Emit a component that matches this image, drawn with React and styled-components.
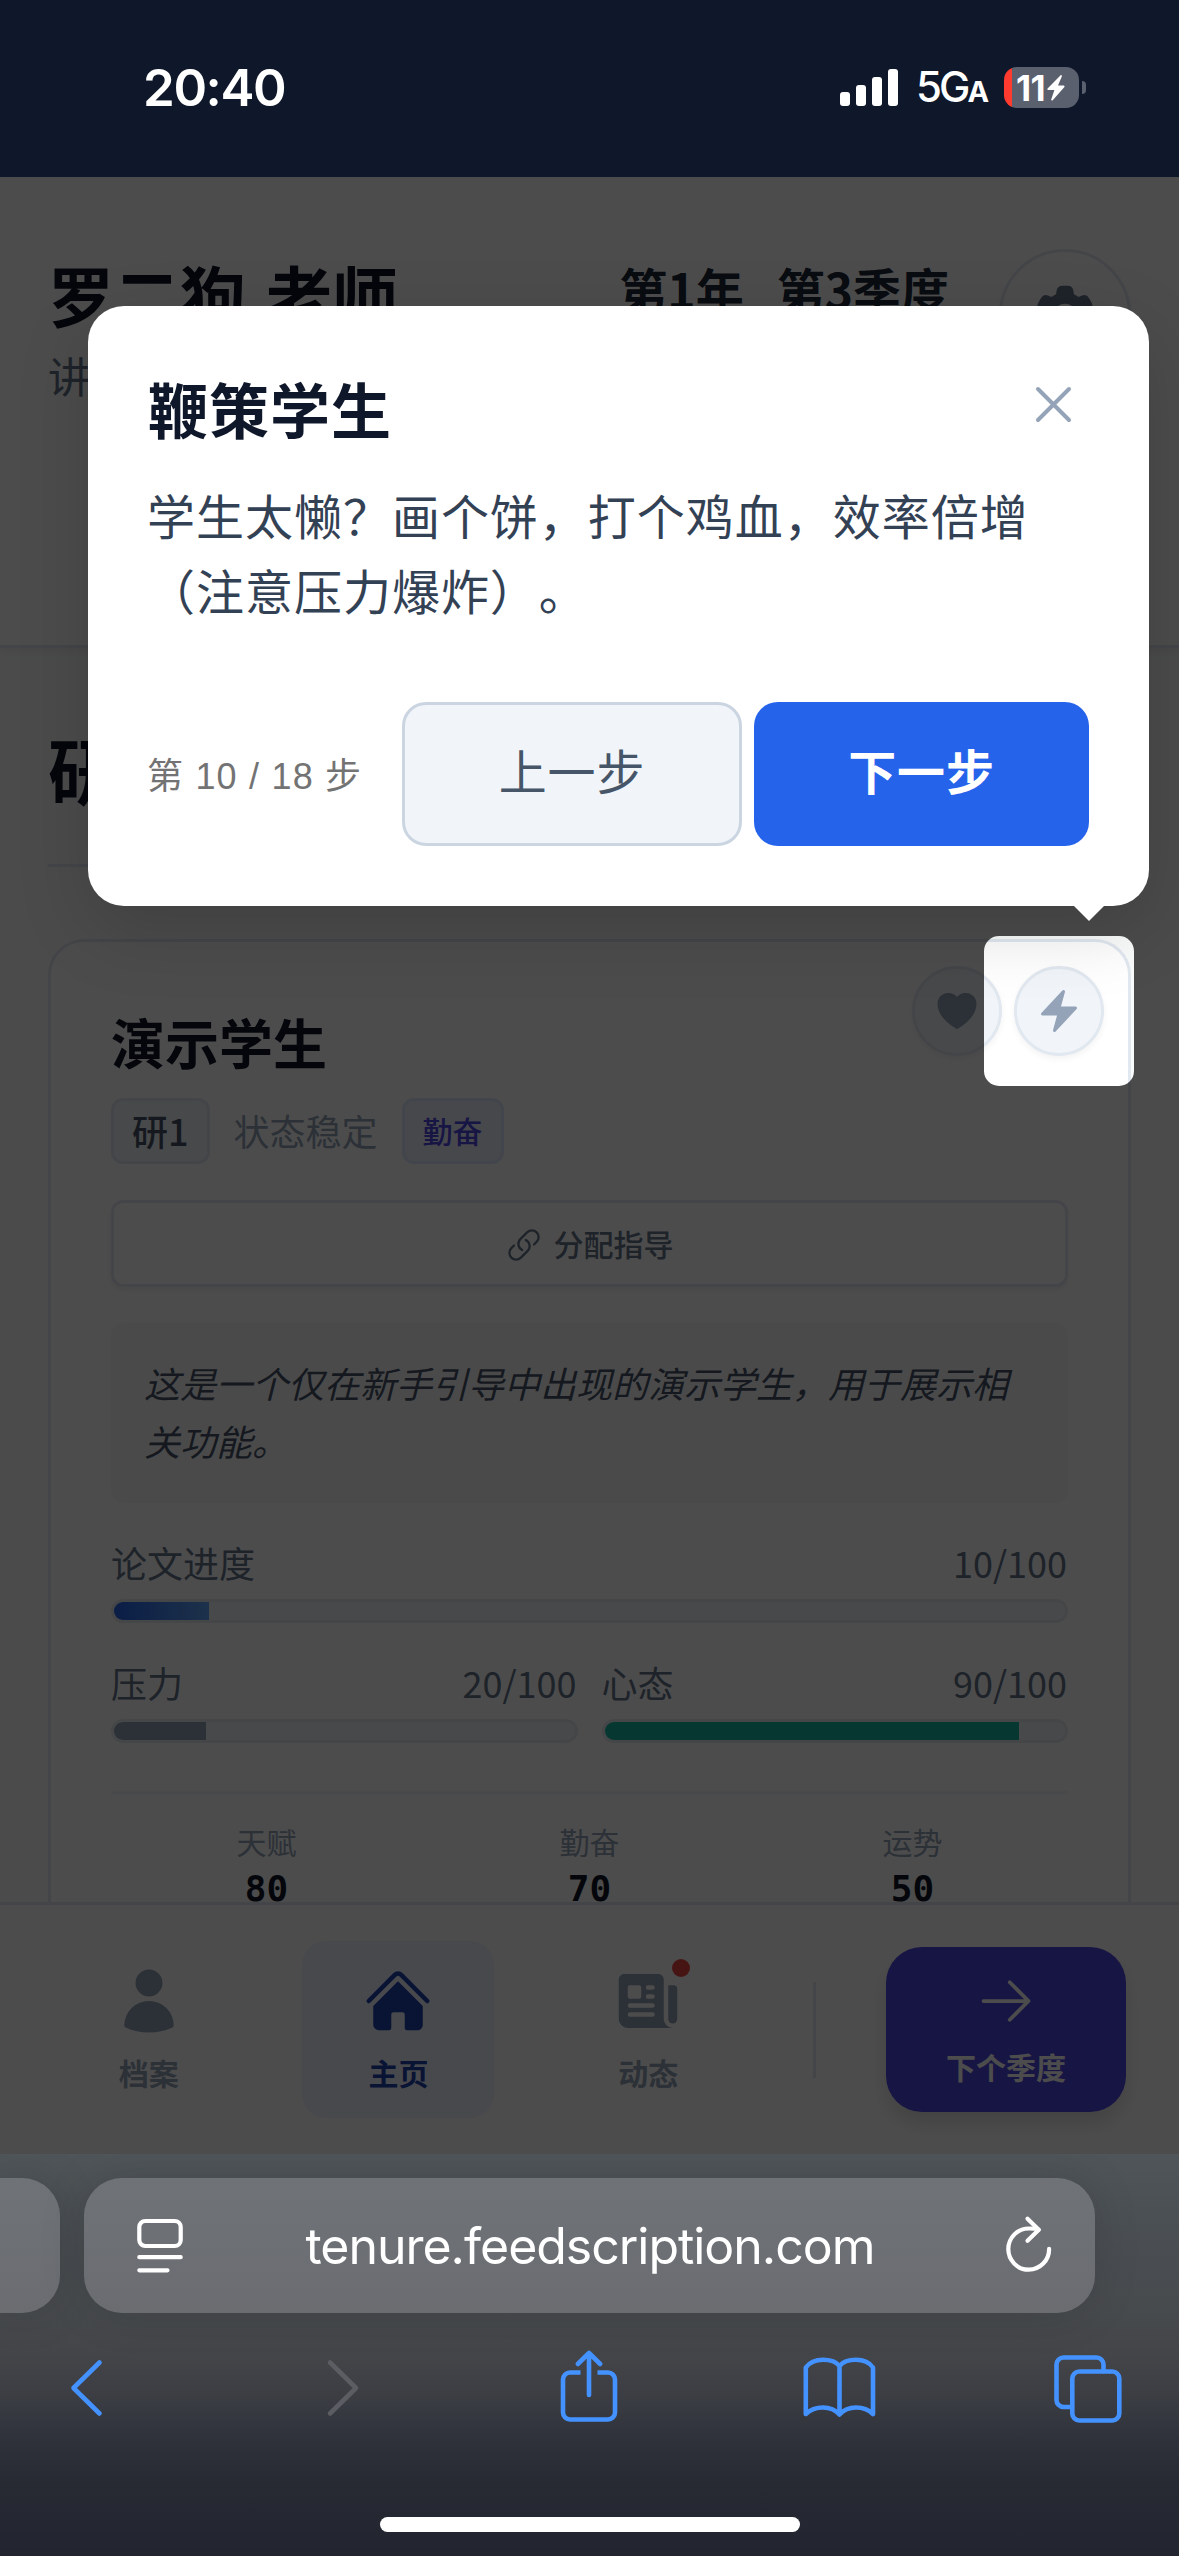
import React from "react";
import styled, { createGlobalStyle, css } from "styled-components";
import {
  HiUser,
  HiHome,
  HiNewspaper,
  HiCog6Tooth,
  HiHeart,
  HiBolt,
  HiOutlineLink,
  HiOutlineArrowRight,
} from "react-icons/hi2";

const cjk = `"Noto Sans CJK SC", "Noto Sans", sans-serif`;
const latin = `Inter, "Noto Sans CJK SC", sans-serif`;

const Global = createGlobalStyle`
  *, *::before, *::after { box-sizing: border-box; }
  html, body { margin: 0; padding: 0; background: #0f172a; }
  body { font-family: ${cjk}; color: #0f172a; text-spacing-trim: space-all; }
  button { font: inherit; margin: 0; padding: 0; border: 0; background: none; }
  svg { display: block; flex: none; }
  h1, h2, h3, p { margin: 0; }
`;

const Screen = styled.div`
  width: 1179px;
  height: 2556px;
  display: flex;
  flex-direction: column;
  overflow: hidden;
`;

/* ---------- status bar ---------- */

const StatusBar = styled.div`
  flex: none;
  height: 177px;
  padding: 0 93px 2px 143px;
  display: flex;
  align-items: center;
  justify-content: space-between;
  background: #0f172a;
  color: #fff;
  font-family: ${latin};
`;

const Clock = styled.span`
  font-size: 51px;
  font-weight: 600;
  letter-spacing: -1.4px;
  line-height: 60px;
`;

const StatusRight = styled.div`
  display: flex;
  align-items: center;
`;

const Network = styled.span`
  margin-left: 18px;
  width: 88px;
  padding-top: 4px;
  font-size: 42px;
  font-weight: 500;
  letter-spacing: -3px;
  line-height: 48px;
  white-space: nowrap;
  small {
    font-size: 29px;
    font-weight: 700;
  }
`;

const Battery = styled.div`
  width: 75px;
  height: 41px;
  border-radius: 13px;
  display: flex;
  align-items: center;
  padding-left: 12px;
  gap: 2px;
  background: linear-gradient(90deg, #ff3b30 8px, #5b606e 8px);
  font-size: 35px;
  font-weight: 700;
  letter-spacing: -0.5px;
`;

const BatteryTip = styled.div`
  width: 4px;
  height: 13px;
  margin-left: 3px;
  border-radius: 0 6px 6px 0;
  background: #5b606e;
`;

/* ---------- application ---------- */

const AppView = styled.div`
  position: relative;
  flex: none;
  height: 1977px;
  display: flex;
  flex-direction: column;
  overflow: hidden;
  background: #fafbfb;
`;

const Header = styled.header`
  flex: none;
  height: 471px;
  padding: 72px 48px 0;
  display: flex;
  justify-content: space-between;
  align-items: flex-start;
  background: #fff;
  border-bottom: 3px solid #e2e8f0;
  box-shadow: 0 3px 9px rgba(0, 0, 0, 0.06);
`;

const Teacher = styled.h1`
  font-size: 66px;
  line-height: 88px;
  font-weight: 700;
  word-spacing: 5px;
`;

const Rank = styled.p`
  margin-top: 8px;
  font-size: 42px;
  line-height: 60px;
  color: #64748b;
`;

const HeaderRight = styled.div`
  display: flex;
  gap: 50px;
`;

const Season = styled.div`
  display: flex;
  gap: 33px;
  font-size: 48px;
  line-height: 78px;
  font-weight: 700;
  color: #1e293b;
`;

const RoundButton = styled.button`
  width: ${(p) => p.$size}px;
  height: ${(p) => p.$size}px;
  display: flex;
  align-items: center;
  justify-content: center;
  border: 3px solid #e2e8f0;
  border-radius: 50%;
  background: ${(p) => p.$fill};
  color: ${(p) => p.$tone};
  box-shadow: 0 3px 6px rgba(0, 0, 0, 0.05);
`;

const Main = styled.main`
  flex: 1;
  min-height: 0;
  overflow: hidden;
  padding: 72px 48px 0;
`;

const SectionHead = styled.div`
  padding-bottom: 48px;
  border-bottom: 3px solid #e2e8f0;
`;

const SectionTitle = styled.h2`
  font-size: 72px;
  line-height: 96px;
  font-weight: 700;
`;

const Card = styled.article`
  position: relative;
  margin-top: 72px;
  height: 1100px;
  padding: 62px 60px 0;
  border: 3px solid #e2e8f0;
  border-radius: 36px;
  background: #fff;
`;

const CardActions = styled.div`
  position: absolute;
  top: 24px;
  right: 24px;
  display: flex;
  gap: 12px;
`;

const StudentName = styled.h3`
  font-size: 54px;
  line-height: 76px;
  font-weight: 700;
`;

const Tags = styled.div`
  margin-top: 18px;
  height: 66px;
  display: flex;
  align-items: center;
  gap: 24px;
  font-size: 36px;
  line-height: 52px;
`;

const Tag = styled.span`
  height: 66px;
  padding: 0 18px 2px;
  display: flex;
  align-items: center;
  border: 3px solid ${(p) => (p.$accent ? "#e0e7ff" : "#e2e8f0")};
  border-radius: 12px;
  background: ${(p) => (p.$accent ? "#eef2ff" : "#f1f5f9")};
  color: ${(p) => (p.$accent ? "#4f46e5" : "#475569")};
  font-size: ${(p) => (p.$accent ? 30 : 36)}px;
  font-weight: 500;
`;

const Mood = styled.span`
  padding-bottom: 2px;
  color: #94a3b8;
`;

const AssignButton = styled.button`
  margin-top: 36px;
  width: 100%;
  height: 87px;
  padding-bottom: 2px;
  display: flex;
  align-items: center;
  justify-content: center;
  gap: 12px;
  border: 3px solid #e2e8f0;
  border-radius: 12px;
  background: #fff;
  box-shadow: 0 3px 6px rgba(0, 0, 0, 0.06);
  color: #64748b;
  font-size: 30px;
  font-weight: 500;

  svg {
    position: relative;
    top: 2px;
  }
`;

const Quote = styled.p`
  margin-top: 36px;
  height: 180px;
  padding: 31px 36px 0 33px;
  border-radius: 12px;
  background: #f8f8fa;
  color: #475569;
  font-size: 36px;
  line-height: 57.5px;
  font-style: italic;
`;

const MeterRow = styled.div`
  margin-top: 32px;
  display: grid;
  grid-template-columns: repeat(${(p) => p.$columns}, 1fr);
  gap: 24px;
`;

const MeterLabel = styled.div`
  display: flex;
  justify-content: space-between;
  margin-bottom: 10px;
  padding-right: 1px;
  font-size: 36px;
  line-height: 54px;
  color: #64748b;
`;

const Track = styled.div`
  height: 24px;
  border: 3px solid #e6ebf1;
  border-radius: 12px;
  overflow: hidden;
  background: #f1f5f9;
`;

const Fill = styled.div`
  height: 100%;
  background: ${(p) => p.$paint};
`;

const Stats = styled.div`
  margin-top: 48px;
  padding-top: 25px;
  border-top: 3px solid #f1f5f9;
  display: grid;
  grid-template-columns: repeat(3, 1fr);
  gap: 12px;
  text-align: center;
`;

const StatLabel = styled.div`
  font-size: 30px;
  line-height: 44px;
  color: #94a3b8;
`;

const StatValue = styled.div`
  font-family: "DejaVu Sans Mono", monospace;
  font-size: 36px;
  line-height: 52px;
  font-weight: 700;
`;

const Nav = styled.nav`
  position: relative;
  flex: none;
  height: 252px;
  padding: 0 53px 0 24px;
  display: flex;
  align-items: flex-start;
  border-top: 3px solid #e2e8f0;
  background: #fff;
`;

const NavTabs = styled.div`
  width: 749px;
  padding-top: 36px;
  display: grid;
  grid-template-columns: repeat(3, 1fr);
  justify-items: center;
`;

const NavTab = styled.button`
  position: relative;
  width: 192px;
  height: 177px;
  padding-top: 24px;
  display: flex;
  flex-direction: column;
  align-items: center;
  gap: 13px;
  border-radius: 24px;
  font-size: 30px;
  line-height: 44px;
  font-weight: 700;
  color: #94a3b8;
  ${(p) =>
    p.$active &&
    css`
      background: #eff3ff;
      color: #1e40af;
    `}
`;

const Dot = styled.span`
  position: absolute;
  top: 18px;
  right: 54px;
  width: 18px;
  height: 18px;
  border-radius: 50%;
  background: #ef4444;
`;

const Divider = styled.div`
  width: 3px;
  height: 96px;
  margin: 77px 70px 0 40px;
  background: #e2e8f0;
`;

const NextSeason = styled.button`
  width: 240px;
  height: 165px;
  margin-top: 42px;
  padding-top: 24px;
  display: flex;
  flex-direction: column;
  align-items: center;
  gap: 13px;
  border-radius: 36px;
  background: #4f46e5;
  box-shadow: 0 12px 18px rgba(0, 0, 0, 0.12);
  color: #fff;
  font-size: 30px;
  line-height: 44px;
  font-weight: 700;
`;

/* ---------- guided tour layer ---------- */

const Spotlight = styled.div`
  position: absolute;
  top: 759px;
  left: 984px;
  width: 150px;
  height: 150px;
  border-radius: 15px;
  box-shadow: 0 0 0 3000px rgba(0, 0, 0, 0.7);
`;

const Tooltip = styled.section`
  position: absolute;
  top: 129px;
  left: 88px;
  width: 1061px;
  height: 600px;
  padding: 60px;
  display: flex;
  flex-direction: column;
  border-radius: 36px;
  background: #fff;
  box-shadow: 0 24px 72px rgba(0, 0, 0, 0.15);
  &::after {
    content: "";
    position: absolute;
    top: 100%;
    right: 45px;
    border: 15px solid transparent;
    border-top-color: #fff;
    border-bottom: 0;
  }
`;

const TipHead = styled.div`
  display: flex;
  justify-content: space-between;
  align-items: flex-start;
  height: 90px;
`;

const TipTitle = styled.h2`
  font-size: 60px;
  line-height: 83px;
  font-weight: 700;
  letter-spacing: 1px;
`;

const CloseButton = styled.button`
  margin: 20px 17px 0 0;
  color: #94a3b8;
`;

const TipBody = styled.p`
  margin: 21px 0 0 -1px;
  height: 150px;
  font-size: 48px;
  line-height: 75px;
  letter-spacing: 0.98px;
  color: #334155;
`;

const TipFoot = styled.div`
  margin-top: auto;
  height: 144px;
  display: flex;
  align-items: center;
`;

const StepCount = styled.span`
  flex: 1;
  margin-left: -1px;
  padding-bottom: 3px;
  font-family: "Liberation Sans", "Noto Sans CJK SC", sans-serif;
  font-size: 36px;
  letter-spacing: 1.2px;
  color: #737373;
  white-space: nowrap;
`;

const TipButton = styled.button`
  flex: none;
  width: ${(p) => (p.$primary ? 335 : 340)}px;
  height: 144px;
  margin-left: ${(p) => (p.$primary ? 12 : 0)}px;
  padding-bottom: 11px;
  border-radius: 24px;
  border: ${(p) => (p.$primary ? "0" : "3px solid #cbd5e1")};
  background: ${(p) => (p.$primary ? "#2563eb" : "#f1f5f9")};
  color: ${(p) => (p.$primary ? "#fff" : "#475569")};
  font-size: 48px;
  font-weight: ${(p) => (p.$primary ? 700 : 400)};
  letter-spacing: 0.9px;
`;

/* ---------- browser chrome ---------- */

const BrowserBar = styled.footer`
  flex: none;
  height: 402px;
  padding-top: 24px;
  display: flex;
  flex-direction: column;
  background: linear-gradient(
    180deg,
    #50555a 0px,
    #4b5054 60px,
    #474a4d 160px,
    #434548 200px,
    #3c3e44 240px,
    #2f323b 285px,
    #272a33 330px,
    #22252f 402px
  );
`;

const AddressRow = styled.div`
  flex: none;
  height: 135px;
  display: flex;
  gap: 24px;
`;

const pill = css`
  background: linear-gradient(180deg, #6f7378, #6a6c70);
  box-shadow: 0 0 48px rgba(0, 0, 0, 0.12);
`;

const PreviousTab = styled.div`
  width: 60px;
  border-radius: 0 38px 38px 0;
  ${pill}
`;

const Address = styled.div`
  width: 1011px;
  padding: 0 43px 0 53px;
  display: flex;
  align-items: center;
  justify-content: space-between;
  border-radius: 38px;
  color: #fff;
  font-family: ${latin};
  font-size: 50px;
  line-height: 60px;
  letter-spacing: -1.03px;
  ${pill}
`;

const Url = styled.span`
  margin-right: 9px;
`;

const Toolbar = styled.div`
  margin-top: 27px;
  padding: 0 55px 0 50px;
  display: flex;
  justify-content: space-between;
  color: #4492ff;
`;

const HomeIndicator = styled.div`
  width: 420px;
  height: 15px;
  margin: 81px auto 0;
  border-radius: 8px;
  background: #fff;
`;

const ToolIcon = ({ color = "currentColor", children }) => (
  <svg
    width="72"
    height="96"
    viewBox="0 0 72 96"
    overflow="visible"
    fill="none"
    stroke={color}
    strokeWidth="4.6"
    strokeLinecap="round"
    strokeLinejoin="round"
  >
    {children}
  </svg>
);

const SignalIcon = () => (
  <svg width="58" height="38" viewBox="0 0 58 38" fill="#fff">
    <rect x="0" y="23" width="10" height="14" rx="3" />
    <rect x="16" y="16" width="10" height="21" rx="3" />
    <rect x="32" y="8" width="10" height="29" rx="3" />
    <rect x="48" y="0" width="10" height="37" rx="3" />
  </svg>
);

const ChargeIcon = () => (
  <svg width="18" height="26" viewBox="0 0 18 26" fill="#fff">
    <path d="M13.4 0.4 0.6 13.4C0 14.2 0.4 15 1.2 15H7.4L4.2 24.4C3.9 25.6 5 26 5.7 25.2L17.2 12.2C17.8 11.4 17.5 10.6 16.6 10.6H11L14.8 1.4C15.1 0.3 14.2-0.3 13.4 0.4Z" />
  </svg>
);

const CloseIcon = () => (
  <svg width="37" height="37" viewBox="0 0 37 37" fill="none" stroke="currentColor" strokeWidth="4" strokeLinecap="round">
    <path d="M3 3 34 34M34 3 3 34" />
  </svg>
);

const PageIcon = () => (
  <svg width="46" height="56" viewBox="0 0 46 56" fill="none" stroke="#fff" strokeWidth="4.2" strokeLinecap="round">
    <rect x="2.3" y="3" width="41.4" height="25" rx="6" />
    <path d="M2.3 39.2H43.7M2.3 52.3H30.5" />
  </svg>
);

const ReloadIcon = () => (
  <svg
    width="46"
    height="56"
    viewBox="0 0 46 56"
    overflow="visible"
    fill="none"
    stroke="#fff"
    strokeWidth="4.2"
    strokeLinecap="round"
    strokeLinejoin="round"
  >
    <path d="M32.5 11.7C29.6 10.7 26.8 10.4 23 10.5A20.4 20.6 0 1 0 43.1 30.9" />
    <path d="M21.5 0.8 32.8 11.7 21.5 22.7" />
  </svg>
);

const meters = [
  [{ label: "论文进度", value: 10, paint: "linear-gradient(90deg, #2563eb, #60a5fa)" }],
  [
    { label: "压力", value: 20, paint: "#94a3b8" },
    { label: "心态", value: 90, paint: "#14b8a6" },
  ],
];

const stats = [
  ["天赋", 80],
  ["勤奋", 70],
  ["运势", 50],
];

const Meter = ({ label, value, paint }) => (
  <div>
    <MeterLabel>
      <span>{label}</span>
      <span>{value}/100</span>
    </MeterLabel>
    <Track>
      <Fill $paint={paint} style={{ width: `${value}%` }} />
    </Track>
  </div>
);

export default function App() {
  return (
    <Screen>
      <Global />
      <StatusBar>
        <Clock>20:40</Clock>
        <StatusRight>
          <SignalIcon />
          <Network>
            5G<small>A</small>
          </Network>
          <Battery>
            <span>11</span>
            <ChargeIcon />
          </Battery>
          <BatteryTip />
        </StatusRight>
      </StatusBar>

      <AppView>
        <Header>
          <div>
            <Teacher>罗二狗 老师</Teacher>
            <Rank>讲</Rank>
          </div>
          <HeaderRight>
            <Season>
              <span>第1年</span>
              <span>第3季度</span>
            </Season>
            <RoundButton $size={132} $fill="#fff" $tone="#64748b">
              <HiCog6Tooth size={72} />
            </RoundButton>
          </HeaderRight>
        </Header>

        <Main>
          <SectionHead>
            <SectionTitle>研</SectionTitle>
          </SectionHead>
          <Card>
            <CardActions>
              <RoundButton $size={90} $fill="#f1f5f9" $tone="#94a3b8">
                <HiHeart size={48} />
              </RoundButton>
              <RoundButton $size={90} $fill="#f1f5f9" $tone="#94a3b8">
                <HiBolt size={48} />
              </RoundButton>
            </CardActions>
            <StudentName>演示学生</StudentName>
            <Tags>
              <Tag>研1</Tag>
              <Mood>状态稳定</Mood>
              <Tag $accent>勤奋</Tag>
            </Tags>
            <AssignButton>
              <HiOutlineLink size={36} />
              分配指导
            </AssignButton>
            <Quote>这是一个仅在新手引导中出现的演示学生，用于展示相关功能。</Quote>
            {meters.map((row, i) => (
              <MeterRow key={i} $columns={row.length}>
                {row.map((m) => (
                  <Meter key={m.label} {...m} />
                ))}
              </MeterRow>
            ))}
            <Stats>
              {stats.map(([label, value]) => (
                <div key={label}>
                  <StatLabel>{label}</StatLabel>
                  <StatValue>{value}</StatValue>
                </div>
              ))}
            </Stats>
          </Card>
        </Main>

        <Nav>
          <NavTabs>
            <NavTab>
              <HiUser size={72} />
              档案
            </NavTab>
            <NavTab $active>
              <HiHome size={72} />
              主页
            </NavTab>
            <NavTab>
              <HiNewspaper size={72} />
              动态
              <Dot />
            </NavTab>
          </NavTabs>
          <Divider />
          <NextSeason>
            <HiOutlineArrowRight size={60} />
            下个季度
          </NextSeason>
        </Nav>

        <Spotlight />
        <Tooltip>
          <TipHead>
            <TipTitle>鞭策学生</TipTitle>
            <CloseButton>
              <CloseIcon />
            </CloseButton>
          </TipHead>
          <TipBody>学生太懒？画个饼，打个鸡血，效率倍增（注意压力爆炸）。</TipBody>
          <TipFoot>
            <StepCount>第 10 / 18 步</StepCount>
            <TipButton>上一步</TipButton>
            <TipButton $primary>下一步</TipButton>
          </TipFoot>
        </Tooltip>
      </AppView>

      <BrowserBar>
        <AddressRow>
          <PreviousTab />
          <Address>
            <PageIcon />
            <Url>tenure.feedscription.com</Url>
            <ReloadIcon />
          </Address>
        </AddressRow>
        <Toolbar>
          <ToolIcon>
            <path d="M49.5 22.5 23.5 48 49.5 73.5" />
          </ToolIcon>
          <ToolIcon color="#5b5d62">
            <path d="M29 22.5 55 48 29 73.5" />
          </ToolIcon>
          <ToolIcon>
            <path d="M29.500 32.500H19a7 7 0 0 0-7 7V72.500a7 7 0 0 0 7 7H57a7 7 0 0 0 7-7V39.500a7 7 0 0 0-7-7H46.500" strokeLinecap="butt" />
            <path d="M38 55V14M26.800 24 38 13 49.200 24" />
          </ToolIcon>
          <ToolIcon>
            <path d="M37.500 26C34 21.500 27.500 19.800 21 19.800C13.500 19.800 7.500 22.500 3.800 27.500V74C8 70 13.500 67.500 21 67.500C27.500 67.500 33.500 70 37.500 74.500C41.500 70 47.500 67.500 54 67.500C61.500 67.500 67 70 71 74V27.500C67.500 22.500 61.500 19.800 54 19.800C47.500 19.800 41 21.500 37.500 26ZM37.500 26V74" />
          </ToolIcon>
          <ToolIcon>
            <path d="M18 67H11.500a7 7 0 0 1-7-7V24.500a7 7 0 0 1 7-7H44.500a7 7 0 0 1 7 7V31" strokeLinecap="butt" />
            <rect x="20.300" y="31.500" width="47" height="49" rx="7" />
          </ToolIcon>
        </Toolbar>
        <HomeIndicator />
      </BrowserBar>
    </Screen>
  );
}
